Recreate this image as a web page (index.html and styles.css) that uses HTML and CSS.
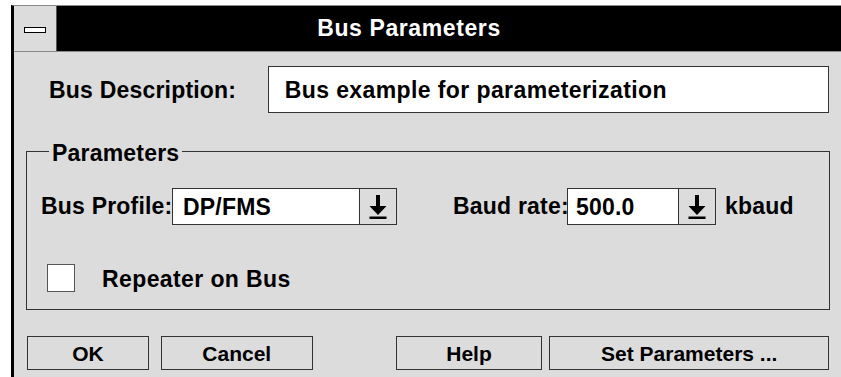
FILE: index.html
```html
<!DOCTYPE html>
<html lang="en">
<head>
    <meta charset="UTF-8">
    <meta name="viewport" content="width=device-width, initial-scale=1.0">
    <title>Bus Parameters</title>
    <link rel="stylesheet" href="styles.css">
</head>
<body>
    <div class="window">
        <div class="titlebar">
            <div class="sysmenu"><span class="sysbar"></span></div>
            <div class="title">Bus Parameters</div>
        </div>

        <div class="content">
            <div class="desc-row">
                <label class="desc-label">Bus Description:</label>
                <div class="textbox">Bus example for parameterization</div>
            </div>

            <fieldset class="group">
                <legend>Parameters</legend>

                <div class="combo-row">
                    <span class="lbl lbl-profile">Bus Profile:</span>
                    <div class="combo combo-profile">
                        <span class="combo-value">DP/FMS</span>
                        <span class="combo-btn">
                            <svg width="18" height="24" viewBox="0 0 18 24"><rect x="7" y="0" width="4" height="12" fill="#000"/><polygon points="0.5,11 17.5,11 9,20" fill="#000"/><rect x="0.5" y="21.5" width="17" height="2.5" fill="#000"/></svg>
                        </span>
                    </div>
                    <span class="lbl lbl-baud">Baud rate:</span>
                    <div class="combo combo-baud">
                        <span class="combo-value">500.0</span>
                        <span class="combo-btn">
                            <svg width="18" height="24" viewBox="0 0 18 24"><rect x="7" y="0" width="4" height="12" fill="#000"/><polygon points="0.5,11 17.5,11 9,20" fill="#000"/><rect x="0.5" y="21.5" width="17" height="2.5" fill="#000"/></svg>
                        </span>
                    </div>
                    <span class="unit">kbaud</span>
                </div>

                <div class="check-row">
                    <span class="checkbox"></span>
                    <span class="check-label">Repeater on Bus</span>
                </div>
            </fieldset>

            <div class="buttons">
                <button class="btn btn-ok">OK</button>
                <button class="btn btn-cancel">Cancel</button>
                <button class="btn btn-help">Help</button>
                <button class="btn btn-set">Set Parameters ...</button>
            </div>
        </div>
    </div>
</body>
</html>
```

FILE: styles.css
```css
body {
    margin: 0;
    background: #fff;
    overflow: hidden;
    font-family: "Liberation Sans", Arial, sans-serif;
    font-weight: bold;
    color: #000;
}

.window {
    margin: 5px 0 0 11px;
    width: 830px;
    height: 380px;
    border-left: 3px solid #000;
    border-top: 1px solid #8a8a8a;
    background: #dcdcdc;
    box-sizing: border-box;
}

.titlebar {
    display: flex;
    height: 46px;
    background: #000;
    border-bottom: 1px solid #8a8a8a;
    box-sizing: border-box;
}

.sysmenu {
    width: 43px;
    background: #dcdcdc;
    border-right: 1px solid #555;
    box-sizing: border-box;
    display: flex;
    align-items: center;
    justify-content: center;
    padding-top: 3px;
}

.sysbar {
    width: 22px;
    height: 6px;
    background: #fff;
    border: 1px solid #000;
    box-sizing: border-box;
}

.title {
    flex: 1;
    color: #fff;
    font-size: 23px;
    letter-spacing: 0.6px;
    text-align: center;
    line-height: 45px;
    padding-right: 80px;
}

.content {
    padding: 0 12px;
}

.desc-row {
    display: flex;
    align-items: center;
    margin-top: 14px;
}

.desc-label {
    width: 219px;
    padding-left: 23px;
    font-size: 23px;
    letter-spacing: 0.2px;
    padding-top: 1px;
}

.textbox {
    width: 562px;
    height: 47px;
    box-sizing: border-box;
    background: #fff;
    border: 1px solid #333;
    padding: 1px 0 0 16px;
    font-size: 23px;
    letter-spacing: 0.4px;
    line-height: 45px;
}

.group {
    margin: 24px 0 0 0;
    width: 804px;
    box-sizing: border-box;
    border: 1px solid #333;
    padding: 0 0 16px 0;
}

.group legend {
    margin-left: 22px;
    padding: 4px 3px 0 3px;
    font-size: 23px;
    letter-spacing: 0.2px;
    line-height: 24px;
}

.combo-row {
    display: flex;
    align-items: center;
    margin-top: 23px;
    padding-left: 14px;
}

.lbl {
    font-size: 23px;
    letter-spacing: 0.2px;
    white-space: nowrap;
}

.lbl-profile {
    width: 131px;
}

.lbl-baud {
    width: 114px;
    margin-left: 56px;
}

.combo {
    display: flex;
    height: 37px;
    box-sizing: border-box;
    border: 1px solid #333;
    background: #fff;
}

.combo-profile {
    width: 225px;
}

.combo-baud {
    width: 149px;
}

.combo-value {
    flex: 1;
    padding-left: 10px;
    font-size: 23px;
    letter-spacing: 0.2px;
    line-height: 36px;
}

.combo-baud .combo-value {
    padding-left: 8px;
}

.combo-btn {
    width: 36px;
    background: #dcdcdc;
    border-left: 1px solid #333;
    display: flex;
    align-items: center;
    justify-content: center;
}

.unit {
    margin-left: 9px;
    font-size: 23px;
    letter-spacing: 0.2px;
}

.check-row {
    display: flex;
    align-items: center;
    margin-top: 37px;
    padding-left: 20px;
}

.checkbox {
    width: 28px;
    height: 28px;
    box-sizing: border-box;
    background: #fff;
    border: 1px solid #555;
}

.check-label {
    margin-left: 27px;
    font-size: 23px;
    letter-spacing: 0.4px;
    padding-top: 4px;
}

.buttons {
    display: flex;
    margin-top: 26px;
    padding-left: 1px;
}

.btn {
    height: 34px;
    box-sizing: border-box;
    background: #dcdcdc;
    border: 1px solid #333;
    font-family: "Liberation Sans", Arial, sans-serif;
    font-weight: bold;
    font-size: 21px;
    padding: 2px 0 0 0;
    color: #000;
}

.btn-ok {
    width: 122px;
}

.btn-cancel {
    width: 152px;
    margin-left: 12px;
}

.btn-help {
    width: 147px;
    margin-left: 83px;
}

.btn-set {
    width: 280px;
    margin-left: 7px;
}
```
